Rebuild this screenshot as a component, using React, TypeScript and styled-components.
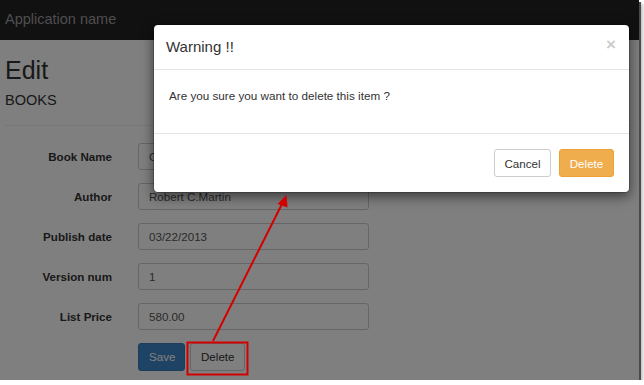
import React from "react";
import styled, { createGlobalStyle } from "styled-components";

const GlobalStyle = createGlobalStyle`
  html, body { margin: 0; padding: 0; background: #ffffff; }
  body { font-family: "Liberation Sans", Arial, sans-serif; color: #333333; }
  * { box-sizing: border-box; }
`;

const Frame = styled.div`
  position: relative;
  width: 639px;
  height: 380px;
  overflow: hidden;
  background: #ffffff;
  box-shadow: 2px 2px 0 0 #4a4a4a, 4px 4px 3px rgba(0, 0, 0, 0.25);
`;

const Navbar = styled.div`
  height: 40px;
  background: #222222;
  display: flex;
  align-items: center;
  padding-left: 5px;
`;

const Brand = styled.span`
  font-size: 14.5px;
  color: #9d9d9d;
  line-height: 1;
  margin-top: -2px;
`;

const Container = styled.div`
  padding: 0 5px;
`;

const PageTitle = styled.h2`
  margin: 17px 0 0;
  font-size: 25px;
  line-height: 27.5px;
  font-weight: normal;
  color: #333333;
`;

const SubTitle = styled.h4`
  margin: 7px 0 0;
  font-size: 14.5px;
  line-height: 16px;
  font-weight: normal;
  color: #333333;
`;

const Rule = styled.hr`
  margin: 17px 0 17px;
  border: 0;
  border-top: 1px solid #eeeeee;
  height: 0;
`;

const Form = styled.div`
  display: flex;
  flex-direction: column;
  gap: 13px;
`;

const FormRow = styled.div`
  display: flex;
  align-items: center;
  height: 27px;
`;

const Label = styled.label`
  width: 107px;
  text-align: right;
  font-size: 11.6px;
  font-weight: bold;
  color: #333333;
`;

const Input = styled.input`
  margin-left: 26px;
  width: 231px;
  height: 27px;
  border: 1px solid #cccccc;
  border-radius: 3px;
  padding: 0 10px;
  font-family: "Liberation Sans", Arial, sans-serif;
  font-size: 11.6px;
  color: #555555;
  background: #ffffff;
  outline: none;
`;

const ButtonRow = styled.div`
  display: flex;
  gap: 5px;
  padding-left: 133px;
`;

const PageButton = styled.button<{ $primary?: boolean }>`
  height: 28px;
  padding: 0 10px;
  border-radius: 3px;
  font-family: "Liberation Sans", Arial, sans-serif;
  font-size: 11.6px;
  border: 1px solid ${(p) => (p.$primary ? "#3a7ab8" : "#cccccc")};
  background: ${(p) => (p.$primary ? "#3f86c8" : "#ffffff")};
  color: ${(p) => (p.$primary ? "#ffffff" : "#333333")};
  width: ${(p) => (p.$primary ? "47px" : "55px")};
`;

const Backdrop = styled.div`
  position: absolute;
  inset: 0;
  background: rgba(0, 0, 0, 0.5);
`;

const Modal = styled.div`
  position: absolute;
  left: 153px;
  top: 24px;
  width: 477px;
  background: #ffffff;
  border: 1px solid rgba(0, 0, 0, 0.2);
  border-radius: 5px;
  box-shadow: 0 4px 12px rgba(0, 0, 0, 0.5);
  background-clip: padding-box;
`;

const ModalHeader = styled.div`
  display: flex;
  justify-content: space-between;
  align-items: flex-start;
  padding: 12px 13px 12px 12px;
  border-bottom: 1px solid #e5e5e5;
`;

const ModalTitle = styled.h4`
  margin: 0;
  font-size: 15px;
  line-height: 20px;
  font-weight: normal;
  color: #333333;
`;

const CloseButton = styled.span`
  font-size: 17px;
  font-weight: bold;
  line-height: 1;
  color: #000000;
  opacity: 0.2;
  margin-top: -1px;
`;

const ModalBody = styled.div`
  padding: 18px 15px 29px;
  font-size: 11.7px;
  line-height: 16px;
  color: #333333;
`;

const ModalFooter = styled.div`
  display: flex;
  justify-content: flex-end;
  gap: 8px;
  padding: 15px 15px 15px;
  border-top: 1px solid #e5e5e5;
`;

const ModalButton = styled.button<{ $warning?: boolean }>`
  height: 28px;
  padding: 0 9px;
  border-radius: 3px;
  font-family: "Liberation Sans", Arial, sans-serif;
  font-size: 11.6px;
  border: 1px solid ${(p) => (p.$warning ? "#eea236" : "#cccccc")};
  background: ${(p) => (p.$warning ? "#f0ad4e" : "#ffffff")};
  color: ${(p) => (p.$warning ? "#ffffff" : "#333333")};
  width: ${(p) => (p.$warning ? "55px" : "57px")};
`;

const Annotation = styled.svg`
  position: absolute;
  left: 0;
  top: 0;
  width: 639px;
  height: 380px;
  pointer-events: none;
`;

const fields: { label: string; value: string }[] = [
  { label: "Book Name", value: "Clean Code" },
  { label: "Author", value: "Robert C.Martin" },
  { label: "Publish date", value: "03/22/2013" },
  { label: "Version num", value: "1" },
  { label: "List Price", value: "580.00" },
];

export default function App() {
  return (
    <>
      <GlobalStyle />
      <Frame>
        <Navbar>
          <Brand>Application name</Brand>
        </Navbar>
        <Container>
          <PageTitle>Edit</PageTitle>
          <SubTitle>BOOKS</SubTitle>
          <Rule />
          <Form>
            {fields.map((f) => (
              <FormRow key={f.label}>
                <Label>{f.label}</Label>
                <Input readOnly value={f.value} />
              </FormRow>
            ))}
            <ButtonRow>
              <PageButton $primary>Save</PageButton>
              <PageButton>Delete</PageButton>
            </ButtonRow>
          </Form>
        </Container>
        <Backdrop />
        <Modal>
          <ModalHeader>
            <ModalTitle>Warning !!</ModalTitle>
            <CloseButton>×</CloseButton>
          </ModalHeader>
          <ModalBody>Are you sure you want to delete this item ?</ModalBody>
          <ModalFooter>
            <ModalButton>Cancel</ModalButton>
            <ModalButton $warning>Delete</ModalButton>
          </ModalFooter>
        </Modal>
        <Annotation viewBox="0 0 639 380">
          <rect x="187.5" y="342.5" width="60" height="32" fill="none" stroke="#d40000" strokeWidth="2" />
          <line x1="213" y1="341" x2="282" y2="204" stroke="#d40000" strokeWidth="2" />
          <polygon points="286.5,195 277.5,204 287.5,207.5" fill="#d40000" />
        </Annotation>
      </Frame>
    </>
  );
}
